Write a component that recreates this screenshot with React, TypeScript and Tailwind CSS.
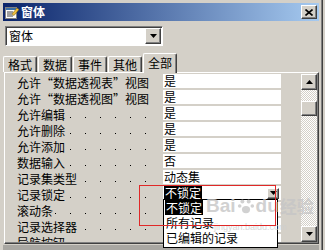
import React from 'react';

type Row = { label: string; value: string; locked?: boolean };

const rows: Row[] = [
  { label: '允许“数据透视表”视图', value: '是' },
  { label: '允许“数据透视图”视图', value: '是' },
  { label: '允许编辑', value: '是' },
  { label: '允许删除', value: '是' },
  { label: '允许添加', value: '是' },
  { label: '数据输入', value: '否' },
  { label: '记录集类型', value: '动态集' },
  { label: '记录锁定', value: '不锁定', locked: true },
  { label: '滚动条', value: '' },
  { label: '记录选择器', value: '' },
  { label: '导航按钮', value: '' },
];

const tabs = ['格式', '数据', '事件', '其他'];

const raised =
  'bg-[#d4d0c8] border-t border-l border-t-white border-l-white border-r border-b border-r-[#404040] border-b-[#404040] shadow-[inset_-1px_-1px_#808080]';

const DownArrow = () => (
  <svg width="7" height="4" viewBox="0 0 7 4">
    <path d="M0 0h7L3.5 4z" fill="#000" />
  </svg>
);

const UpArrow = () => (
  <svg width="7" height="4" viewBox="0 0 7 4">
    <path d="M0 4h7L3.5 0z" fill="#000" />
  </svg>
);

const FormIcon = () => (
  <svg width="14" height="14" viewBox="0 0 14 14">
    <rect x="0.5" y="2.5" width="11" height="11" fill="#fff" stroke="#808080" />
    <rect x="1" y="3" width="10" height="2" fill="#3a6ea5" />
    <path d="M2 7h6M2 9h5M2 11h6" stroke="#404040" />
    <path d="M7 9l5-6 2 1.5-5 6z" fill="#f0c040" stroke="#806000" strokeWidth="0.6" />
  </svg>
);

export default function App() {
  return (
    <div className="w-[325px] h-[250px] bg-[#d4d0c8] overflow-hidden relative font-['Noto_Sans_CJK_SC','Noto_Sans',sans-serif] text-[12px] text-black">
      <div className="w-[323px] h-full flex flex-col pl-[3px] pr-[3px] pt-[3px] border-r border-r-[#404040] shadow-[inset_-1px_0_#808080]">
        {/* title bar */}
        <div className="h-[18px] flex items-center justify-between pl-[2px] pr-[2px] bg-[linear-gradient(to_right,#0a246a,#a6caf0)]">
          <div className="flex items-center gap-[2px]">
            <FormIcon />
            <span className="text-white font-bold leading-none">窗体</span>
          </div>
          <div className={`w-[16px] h-[14px] flex items-center justify-center ${raised}`}>
            <svg width="8" height="7" viewBox="0 0 8 7">
              <path d="M0.5 0.5l7 6M7.5 0.5l-7 6" stroke="#000" strokeWidth="1.6" />
            </svg>
          </div>
        </div>

        {/* object combo */}
        <div className="mt-[5px] ml-[2px] w-[158px] h-[20px] flex bg-white border-t border-l border-t-[#808080] border-l-[#808080] border-r border-b border-r-white border-b-white shadow-[inset_1px_1px_#404040]">
          <span className="flex-1 pl-[3px] leading-[18px]">窗体</span>
          <div className={`w-[16px] h-[16px] mt-[1px] mr-[1px] flex items-center justify-center ${raised}`}>
            <DownArrow />
          </div>
        </div>

        {/* tabs */}
        <div className="mt-[7px] h-[19px] flex items-end">
          {tabs.map((t) => (
            <div
              key={t}
              className="h-[16px] px-[4px] mr-[1px] flex items-center leading-none bg-[#d4d0c8] border-t border-l border-t-white border-l-white border-r border-r-[#404040] shadow-[inset_-1px_0_#808080] rounded-t-[2px]"
            >
              {t}
            </div>
          ))}
          <div className="relative z-10 h-[20px] mb-[-1px] px-[4px] flex items-start pt-[1px] leading-[15px] bg-[#d4d0c8] border-t border-l border-t-white border-l-white border-r border-r-[#404040] shadow-[inset_-1px_0_#808080] rounded-t-[2px]">
            全部
          </div>
        </div>

        {/* property sheet */}
        <div className="ml-[1px] h-[172px] flex p-[1px] border-t border-l border-t-white border-l-white border-r border-b border-r-[#404040] border-b-[#404040] shadow-[inset_-1px_-1px_#808080]">
          <div className="flex-1 overflow-hidden">
            {rows.map((r) => (
              <div key={r.label} className="h-[16px] flex">
                <div className="w-[146px] mr-[11px] h-[16px] bg-[linear-gradient(to_right,#000_1px,transparent_1px)] bg-[length:15px_1px] bg-[position:4px_11px] bg-repeat-x">
                  <span className="inline-block pl-[11px] pr-[2px] bg-[#d4d0c8] leading-[16px] whitespace-nowrap">
                    {r.label}
                  </span>
                </div>
                <div className="w-[118px] h-[14px] bg-white flex items-center justify-between">
                  {r.locked ? (
                    <>
                      <span className="ml-[1px] px-[1px] bg-black text-white leading-[14px]">{r.value}</span>
                      <div className={`w-[12px] h-[11px] mr-[2px] flex items-center justify-center ${raised}`}>
                        <DownArrow />
                      </div>
                    </>
                  ) : (
                    <span className="pl-[1px] leading-[14px]">{r.value}</span>
                  )}
                </div>
              </div>
            ))}
          </div>

          {/* scrollbar */}
          <div className="w-[16px] flex flex-col">
            <div className={`h-[16px] flex items-center justify-center ${raised}`}>
              <UpArrow />
            </div>
            <div className="h-[11px] bg-[repeating-conic-gradient(#d4d0c8_0%_25%,#ffffff_0%_50%)] bg-[length:2px_2px]" />
            <div className={`h-[15px] ${raised}`} />
            <div className="flex-1 bg-[repeating-conic-gradient(#d4d0c8_0%_25%,#ffffff_0%_50%)] bg-[length:2px_2px]" />
            <div className={`h-[16px] flex items-center justify-center ${raised}`}>
              <DownArrow />
            </div>
          </div>
        </div>
        <div className="flex-1 mt-[1px] bg-[#a9a7a2]" />
      </div>

      {/* open dropdown list */}
      <div className="absolute left-[163px] top-[199px] w-[115px] h-[49px] bg-white border border-black flex flex-col">
        <div className="h-[15px] flex items-center">
          <span className="ml-[1px] px-[1px] bg-black text-white leading-[15px]">不锁定</span>
        </div>
        <div className="h-[15px] pl-[2px] leading-[15px]">所有记录</div>
        <div className="h-[15px] pl-[2px] leading-[15px]">已编辑的记录</div>
      </div>

      {/* baidu watermark */}
      <div className="absolute left-[206px] top-[196px] flex items-center gap-[1px] text-[#c6c6c6] opacity-80 font-bold text-[19px] leading-none font-['Liberation_Sans',sans-serif] pointer-events-none">
        <span>Bai</span>
        <svg width="18" height="18" viewBox="0 0 20 20">
          <circle cx="6" cy="5" r="2.2" fill="#c6c6c6" />
          <circle cx="13" cy="5" r="2.2" fill="#c6c6c6" />
          <circle cx="3" cy="10" r="2" fill="#c6c6c6" />
          <circle cx="17" cy="10" r="2" fill="#c6c6c6" />
          <ellipse cx="10" cy="14" rx="4.5" ry="4" fill="#c6c6c6" />
        </svg>
        <span>du</span>
        <span className="font-['Noto_Sans_CJK_SC',sans-serif] text-[17px]">经验</span>
      </div>
      <div className="absolute left-[214px] top-[223px] text-[9px] leading-none text-[#cfcfcf] opacity-80 font-['Liberation_Sans',sans-serif] pointer-events-none">
        jingyan.baidu.com
      </div>

      {/* red annotation */}
      <div className="absolute left-[139px] top-[185px] w-[137px] h-[41px] border border-[#e02828]" />
    </div>
  );
}
